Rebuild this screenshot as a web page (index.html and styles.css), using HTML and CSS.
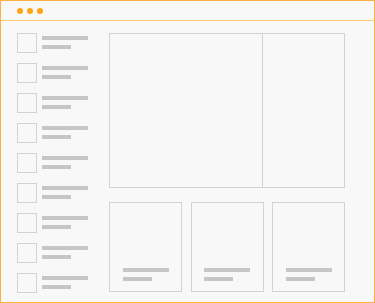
FILE: index.html
```html
<!DOCTYPE html>
<html>
	<head>
		<meta charset="UTF-8">
		<title>wireframe</title>
		<link rel="stylesheet" href="styles.css">
	</head>
	<body>
		<div class="frame">
			<div class="bar">
				<span class="dot"></span>
				<span class="dot"></span>
				<span class="dot"></span>
			</div>
			<div class="content">
				<ul class="side">
					<li><i class="thumb"></i><div class="lines"><b class="long"></b><b class="short"></b></div></li>
					<li><i class="thumb"></i><div class="lines"><b class="long"></b><b class="short"></b></div></li>
					<li><i class="thumb"></i><div class="lines"><b class="long"></b><b class="short"></b></div></li>
					<li><i class="thumb"></i><div class="lines"><b class="long"></b><b class="short"></b></div></li>
					<li><i class="thumb"></i><div class="lines"><b class="long"></b><b class="short"></b></div></li>
					<li><i class="thumb"></i><div class="lines"><b class="long"></b><b class="short"></b></div></li>
					<li><i class="thumb"></i><div class="lines"><b class="long"></b><b class="short"></b></div></li>
					<li><i class="thumb"></i><div class="lines"><b class="long"></b><b class="short"></b></div></li>
					<li><i class="thumb"></i><div class="lines"><b class="long"></b><b class="short"></b></div></li>
				</ul>
				<div class="main">
					<div class="hero">
						<div class="pane-l"></div>
						<div class="pane-r"></div>
					</div>
					<div class="cards">
						<div class="card"><div class="lines"><b class="long"></b><b class="short"></b></div></div>
						<div class="card"><div class="lines"><b class="long"></b><b class="short"></b></div></div>
						<div class="card"><div class="lines"><b class="long"></b><b class="short"></b></div></div>
					</div>
				</div>
			</div>
		</div>
	</body>
</html>
```

FILE: styles.css
```css
*{
	margin: 0;
	padding: 0;
	box-sizing: border-box;
}
body{
	background: #f8f8f8;
	font-family: "Liberation Sans", Arial, sans-serif;
}
.frame{
	width: 375px;
	height: 303px;
	border: 1px solid #fbb23e;
	background: #f8f8f8;
}
.bar{
	height: 20px;
	border-bottom: 1px solid #fdca6c;
	display: flex;
	align-items: center;
	gap: 4px;
	padding-left: 16px;
}
.dot{
	width: 6px;
	height: 6px;
	border-radius: 50%;
	background: #ffa412;
}
.content{
	display: flex;
	padding: 12px 29px 0 16px;
}
.side{
	list-style: none;
	width: 92px;
	display: flex;
	flex-direction: column;
	gap: 10px;
}
.side li{
	display: flex;
	gap: 5px;
}
.thumb{
	width: 20px;
	height: 20px;
	border: 1px solid #d2d2d2;
}
.lines{
	display: flex;
	flex-direction: column;
	gap: 5px;
	width: 46px;
}
.side .lines{
	padding-top: 3px;
}
.lines b{
	display: block;
	height: 4px;
	background: #c6c6c6;
}
.long{
	width: 46px;
}
.short{
	width: 29px;
}
.main{
	flex: 1;
	display: flex;
	flex-direction: column;
	gap: 14px;
}
.hero{
	height: 155px;
	border: 1px solid #d2d2d2;
	display: flex;
}
.pane-l{
	width: 153px;
	border-right: 1px solid #d2d2d2;
}
.pane-r{
	flex: 1;
}
.cards{
	display: flex;
	justify-content: space-between;
}
.card{
	width: 73px;
	height: 90px;
	border: 1px solid #d2d2d2;
	display: flex;
	flex-direction: column;
	justify-content: flex-end;
	align-items: center;
	padding-bottom: 10px;
}
```
